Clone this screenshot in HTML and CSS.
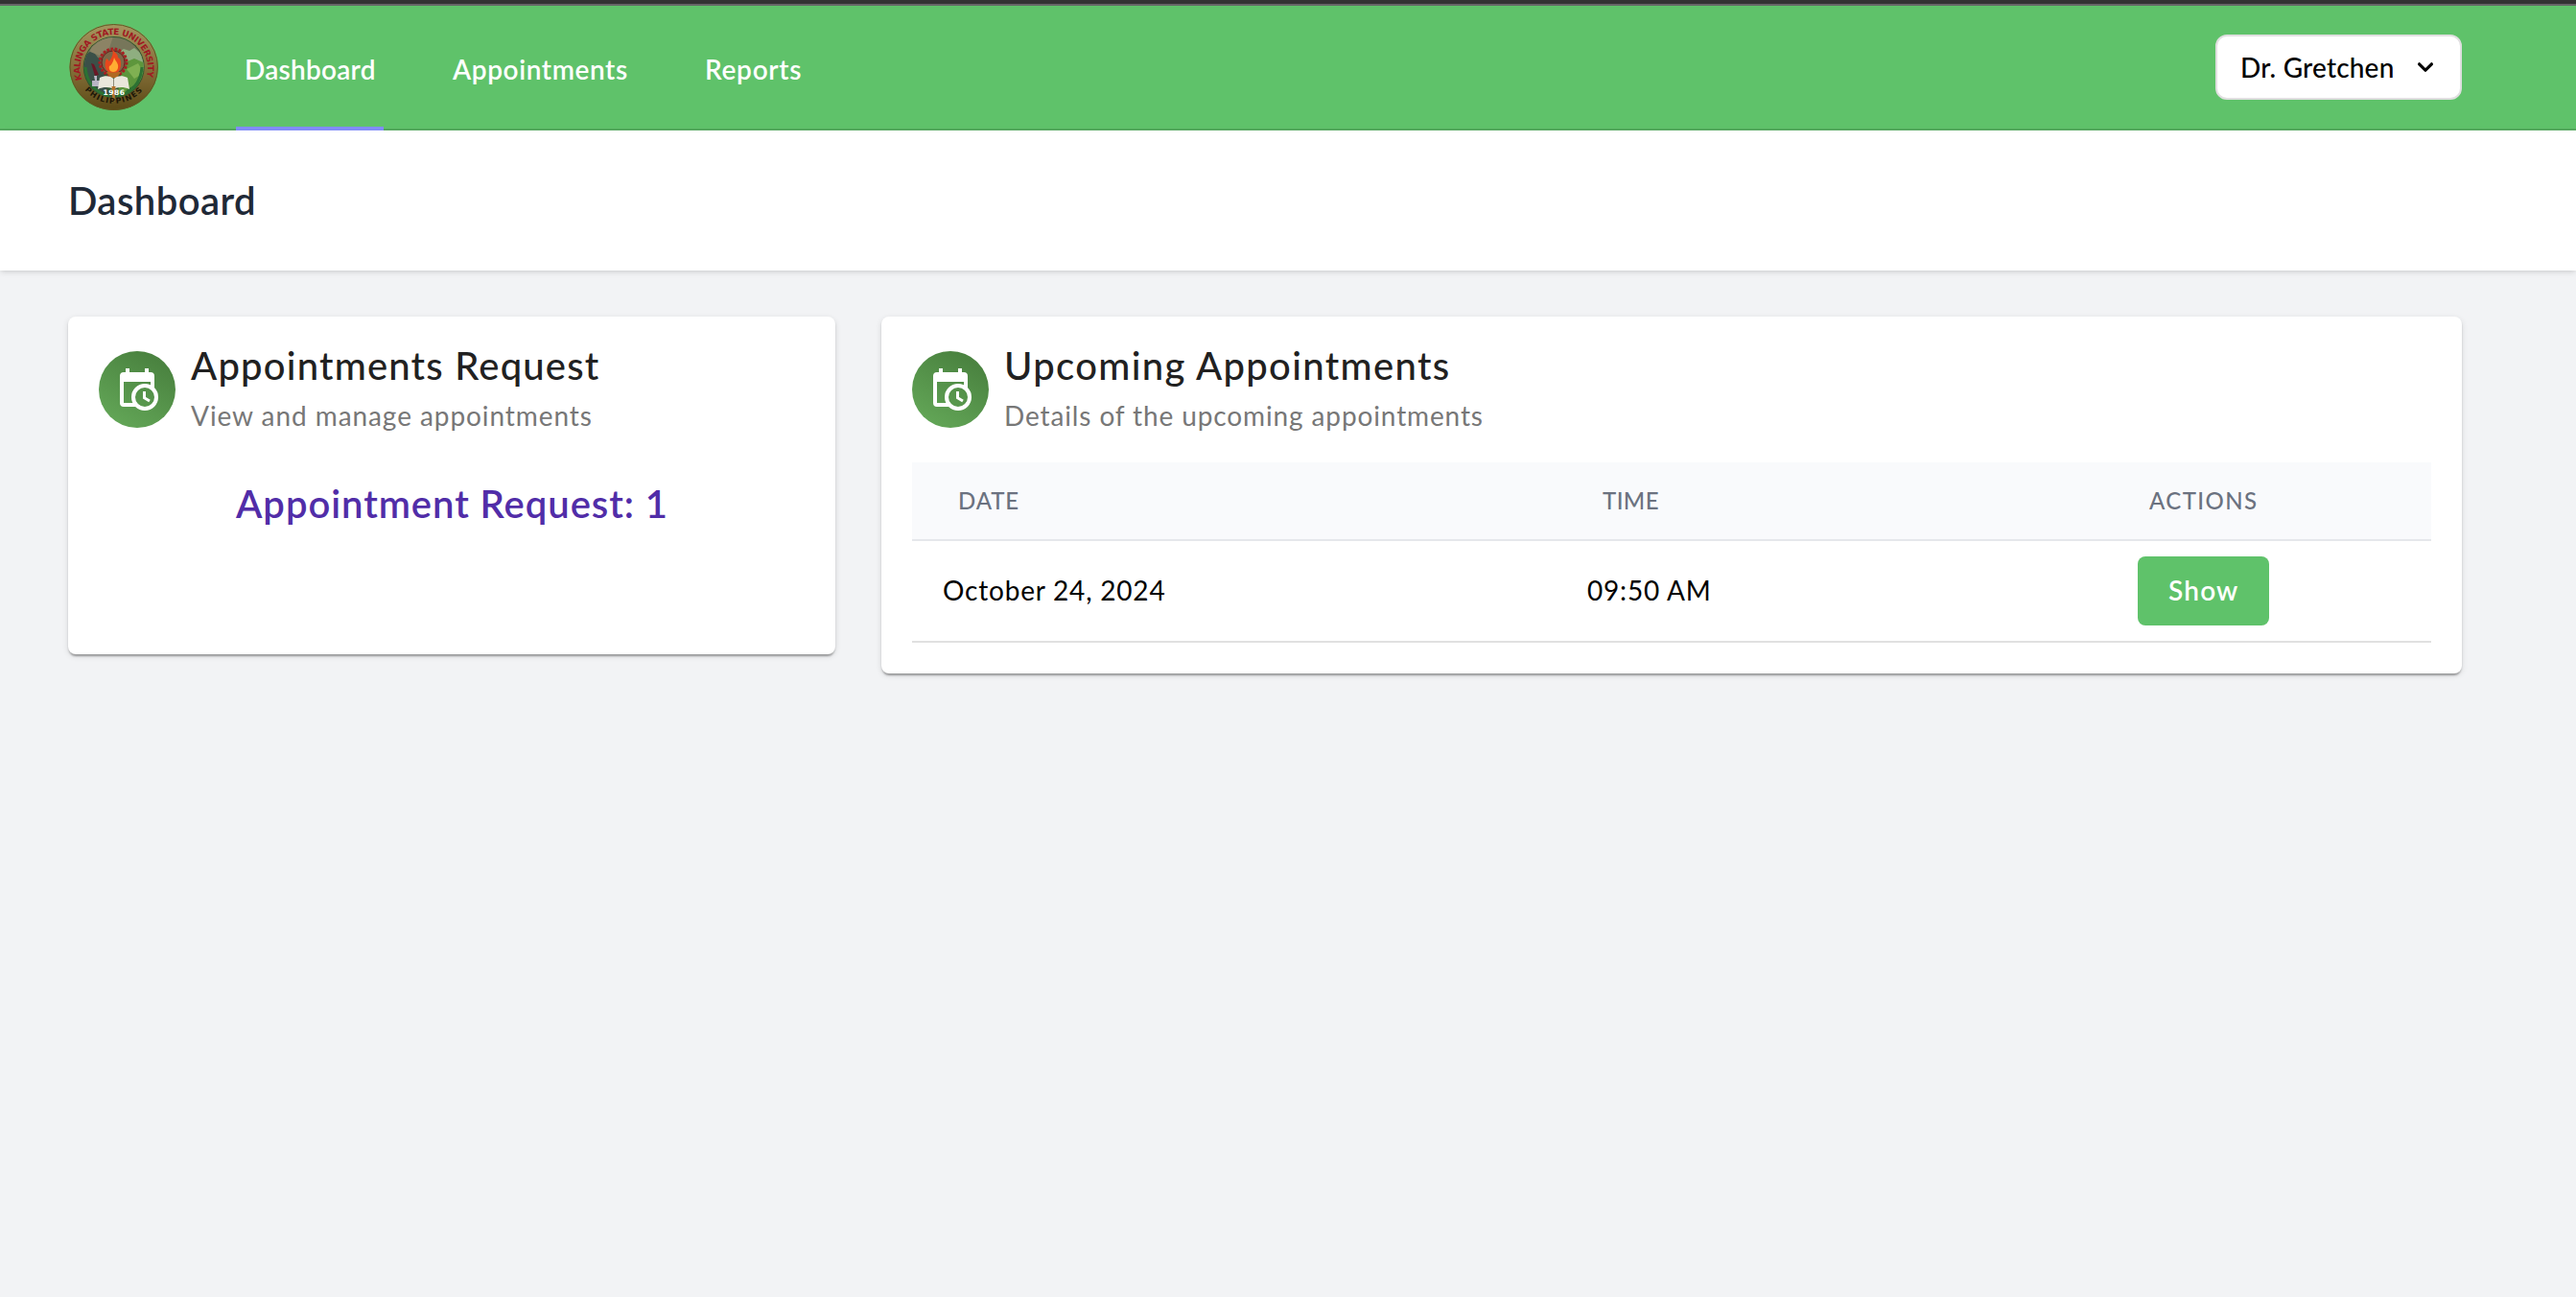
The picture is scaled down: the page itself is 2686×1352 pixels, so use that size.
FILE: index.html
```html
<!DOCTYPE html>
<html lang="en">
<head>
<meta charset="utf-8">
<title>Dashboard</title>
<link rel="stylesheet" href="styles.css">
</head>
<body>
<div class="window-edge"></div>
<nav class="navbar">
  <a class="logo" href="#">
    <svg viewBox="0 0 94 92" width="94" height="92">
      <defs>
        <linearGradient id="ring" x1="0" y1="0" x2="0" y2="1">
          <stop offset="0" stop-color="#a5955e"/><stop offset=".5" stop-color="#86703a"/><stop offset="1" stop-color="#5c4a16"/>
        </linearGradient>
        <clipPath id="inner"><circle cx="46.7" cy="46" r="31"/></clipPath>
        <path id="arcTop" d="M13.6 59A35.2 35.2 0 1 1 80 59"/>
        <path id="arcBottom" d="M14.5 67.5A40 40 0 0 0 79 67.5"/>
      </defs>
      <ellipse cx="46.7" cy="46" rx="46.2" ry="45" fill="url(#ring)"/>
      <ellipse cx="46.7" cy="46" rx="45.7" ry="44.5" fill="none" stroke="#5e5a22"/>
      <circle cx="46.7" cy="46" r="32" fill="#31572f"/>
      <g clip-path="url(#inner)">
        <path fill="#77765a" d="M14 14H80V50H14z"/>
        <path fill="#3b5048" d="M14 36L24 28 30 36 38 40 36 60 44 78H14z"/>
        <path fill="#8c8365" d="M24 18L46 14 42 26 32 34 22 30z"/>
        <path fill="#8fae80" d="M50 31L57 27 63 29 68 26 80 36V48H50z"/>
        <path fill="#5d963c" d="M56 42L68 37 80 42V78H50z"/>
        <path fill="#7fb052" d="M60 48L72 42 78 52 68 58z"/>
        <path fill="#2f6b2c" d="M60 70L78 58 74 72 56 80z"/>
      </g>
      <path fill="none" stroke="#2c7233" stroke-width="3" d="M17 46C18 62 28 73 42 76M76 46C75 62 65 73 51 76"/>
      <circle cx="46" cy="41" r="14" fill="#77573a" stroke="#a81f22" stroke-width="3" stroke-dasharray="2.6 1.6"/>
      <circle cx="46" cy="41" r="12" fill="#7b6848" stroke="#6d2020"/>
      <path fill="#6a1826" d="M23 42L26 43 31 54 27 55z"/>
      <path fill="#b9b6c4" d="M26 55H29V60H32V66H24V60H27z"/>
      <path fill="#b06a22" d="M39 51H54L50 57H43z"/>
      <path fill="#e8471c" d="M45 27C48 32 51 31 51 36 55 37 55 46 52 50 50 52 42 52 40 50 36 46 38 39 39 37 41 38 41 39 42 40 44 36 47 33 45 27z"/>
      <path fill="#ffac32" d="M47 36C49 41 52 42 51 47 50 50 48 51 46 51 43 51 41 48 42 45 44 44 46 41 47 36z"/>
      <path fill="#eae7db" d="M32 57C38 54 43 55 46.5 58 50 55 55 54 61 57L63 69C56 66 50 67 46.5 69 43 67 37 66 30 69z"/>
      <path stroke="#8f8c7a" d="M46.5 58V69"/>
      <path fill="#b5722a" d="M44.5 66H48.5L47.5 82H45.5z"/>
      <text class="seal-year" x="35.5" y="75.2">1986</text>
      <text class="seal-top"><textPath href="#arcTop" startOffset="0" textLength="131">KALINGA STATE UNIVERSITY</textPath></text>
      <text class="seal-bottom"><textPath href="#arcBottom" startOffset="3" textLength="68">PHILIPPINES</textPath></text>
    </svg>
  </a>
  <div class="nav-links">
    <a class="nav-link nav-dashboard active" href="#">Dashboard</a>
    <a class="nav-link nav-appointments" href="#">Appointments</a>
    <a class="nav-link nav-reports" href="#">Reports</a>
  </div>
  <button class="user-menu" type="button">
    <span>Dr. Gretchen</span>
    <svg viewBox="0 0 20 20" width="32" height="32"><path fill="currentColor" fill-rule="evenodd" clip-rule="evenodd" d="M5.293 7.293a1 1 0 011.414 0L10 10.586l3.293-3.293a1 1 0 111.414 1.414l-4 4a1 1 0 01-1.414 0l-4-4a1 1 0 010-1.414z"/></svg>
  </button>
</nav>
<header class="page-header"><h1>Dashboard</h1></header>

<svg class="symbols" width="0" height="0">
  <symbol id="calendar-clock" viewBox="0 0 48 48">
    <mask id="clock-hole"><path fill="#fff" d="M0 0H48V48H0z"/><circle cx="32" cy="32" r="12" fill="#000"/></mask>
    <path mask="url(#clock-hole)" fill="#fff" fill-rule="evenodd" d="M12 2H16V6H32V2H36V6H38A4 4 0 0 1 42 10V38A4 4 0 0 1 38 42H10A4 4 0 0 1 6 38V10A4 4 0 0 1 10 6H12zM10 16V38H38V16z"/>
    <circle cx="32" cy="32" r="12" fill="none" stroke="#fff" stroke-width="4"/>
    <path fill="none" stroke="#fff" stroke-width="3" d="M31.5 26V32.7L37 36"/>
  </symbol>
</svg>

<main class="content">
  <section class="card request-card">
    <div class="card-header">
      <div class="avatar"><svg width="48" height="48"><use href="#calendar-clock"/></svg></div>
      <div class="card-heading">
        <h2 class="title-request">Appointments Request</h2>
        <p class="sub-request">View and manage appointments</p>
      </div>
    </div>
    <a class="request-count" href="#">Appointment Request: 1</a>
  </section>
  <section class="card upcoming-card">
    <div class="card-header">
      <div class="avatar"><svg width="48" height="48"><use href="#calendar-clock"/></svg></div>
      <div class="card-heading">
        <h2 class="title-upcoming">Upcoming Appointments</h2>
        <p class="sub-upcoming">Details of the upcoming appointments</p>
      </div>
    </div>
    <div class="table">
      <div class="row head">
        <span class="th-date">DATE</span><span class="th-time">TIME</span><span class="th-actions">ACTIONS</span>
      </div>
      <div class="row body">
        <span>October 24, 2024</span><span>09:50 AM</span><span><a class="show" href="#">Show</a></span>
      </div>
    </div>
  </section>
</main>
</body>
</html>
```
FILE: styles.css
```css
* { box-sizing: border-box; }
body {
  margin: 0;
  min-height: 1352px;
  background: #f2f3f5;
  font-family: Lato, "Liberation Sans", sans-serif;
  font-size: 28px;
  color: #000;
}
a { color: inherit; text-decoration: none; }
h1, h2, p { margin: 0; }
.symbols { display: block; height: 0; }

.window-edge { height: 6px; background: #333; border-bottom: 2px solid #666; }

.navbar {
  display: flex;
  height: 130px;
  padding: 0 119px 0 72px;
  background: #5fc26a;
  border-bottom: 2px solid #56aa5f;
}
.logo { padding-top: 18px; width: 94px; }
.logo svg { display: block; }
.seal-top, .seal-bottom, .seal-year { font-family: "DejaVu Sans", sans-serif; font-weight: 700; }
.seal-top { font-size: 9px; fill: #a01a22; }
.seal-bottom { font-size: 8px; fill: #1d1708; }
.seal-year { font-size: 7.5px; fill: #fff; letter-spacing: .5px; }

.nav-links { display: flex; gap: 62px; margin-left: 80px; }
.nav-link {
  height: 130px;
  padding: 5px 9px 0;
  line-height: 122px;
  border-bottom: 4px solid transparent;
  font-weight: 600;
  color: #fff;
}
.nav-link.active { border-bottom-color: #818cf8; }
.nav-dashboard { width: 154px; letter-spacing: .25px; }
.nav-appointments { margin-left: 1px; letter-spacing: .6px; width: 201px; }
.nav-reports { letter-spacing: .7px; }

.user-menu {
  display: flex;
  align-items: center;
  width: 257px;
  height: 68px;
  margin: 30px 0 0 auto;
  padding: 0 20px 1px 24px;
  gap: 17px;
  background: #fff;
  border: 2px solid #e0dfe0;
  border-radius: 12px;
  font: 500 28px/40px Lato, sans-serif;
  letter-spacing: .2px;
  color: #000;
}
.user-menu span { width: 160px; text-align: left; white-space: nowrap; }
.user-menu svg { flex: none; }

.page-header {
  height: 146px;
  padding: 2px 71px 0;
  background: #fff;
  box-shadow: 0 2px 6px rgba(0, 0, 0, .1), 0 2px 4px -2px rgba(0, 0, 0, .1);
}
.page-header h1 { font-size: 40px; font-weight: 600; line-height: 143px; letter-spacing: .45px; color: #1f2937; }

.content {
  display: grid;
  grid-template-columns: 800px 1648px;
  gap: 48px;
  align-items: start;
  padding: 48px 71px;
}
.card {
  padding: 18px 32px 0;
  background: #fff;
  border-radius: 8px;
  box-shadow: 0 4px 2px -2px rgba(0, 0, 0, .2), 0 2px 2px rgba(0, 0, 0, .14), 0 2px 6px rgba(0, 0, 0, .12);
}
.request-card { height: 352px; }
.upcoming-card { height: 372px; }
.card-header { display: flex; gap: 16px; height: 104px; }
.card-heading { padding-top: 1px; }
.avatar {
  display: flex;
  flex: none;
  align-items: center;
  justify-content: center;
  width: 80px;
  height: 80px;
  margin-top: 18px;
  border-radius: 50%;
  background: linear-gradient(30deg, #66ab5a, #457b3b);
}
.card h2 { font-size: 40px; font-weight: 500; line-height: 64px; color: #212121; white-space: nowrap; }
.card p { font-size: 28px; line-height: 40px; color: #777; white-space: nowrap; }
.title-request { letter-spacing: 1.2px; }
.title-upcoming { letter-spacing: 1.35px; }
.sub-request { letter-spacing: .93px; }
.sub-upcoming { letter-spacing: .88px; }
.request-count {
  display: block;
  margin-top: 43px;
  padding-left: 1px;
  text-align: center;
  font-size: 40px;
  font-weight: 600;
  line-height: 60px;
  letter-spacing: .94px;
  color: #512da8;
}

.table { margin-top: 30px; }
.row { display: grid; grid-template-columns: 672px 570px 342px; }
.row.head {
  height: 82px;
  border-bottom: 2px solid #e5e7eb;
  background: #f9fafc;
  font-size: 24px;
  font-weight: 500;
  line-height: 79px;
  color: #6b7280;
}
.head span { padding-left: 48px; }
.th-date { letter-spacing: .87px; }
.th-time { letter-spacing: .4px; }
.th-actions { letter-spacing: 1.4px; }
.row.body { height: 106px; border-bottom: 2px solid #e0e0e0; line-height: 103px; letter-spacing: .8px; }
.body span { padding-left: 32px; }
.show {
  display: block;
  width: 137px;
  height: 72px;
  margin: 16px 0 0 4px;
  padding-left: 32px;
  background: #5fc26a;
  border-radius: 8px;
  line-height: 71px;
  font-weight: 600;
  letter-spacing: 1.2px;
  color: #fff;
}
```
